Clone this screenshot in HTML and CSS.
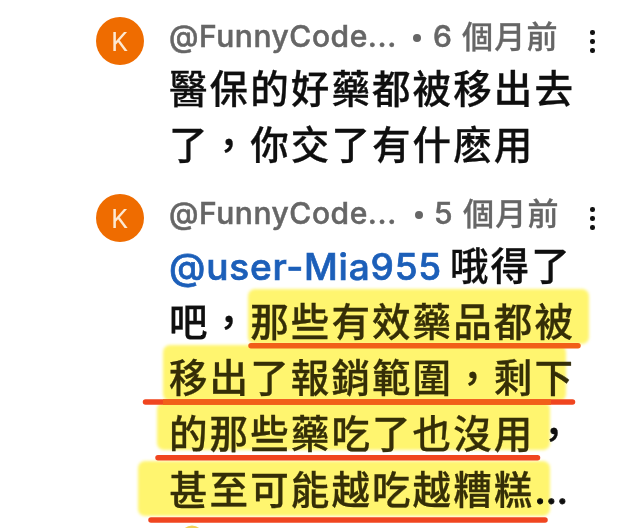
FILE: index.html
```html
<!DOCTYPE html>
<html lang="zh-Hant">
<head>
  <meta charset="UTF-8" />
  <title>留言</title>
  <link rel="stylesheet" href="styles.css">
</head>
<body>
  <main class="comments">

    <article class="comment">
      <div class="avatar">K</div>
      <div class="comment-body">
        <header class="comment-header">
          <span class="author">@FunnyCode...</span>
          <span class="dot"></span>
          <span class="number">6</span>
          <span class="time">個月前</span>
        </header>
        <p class="comment-text">醫保的好藥都被移出去<br>了，你交了有什麽用</p>
      </div>
      <div class="menu"><i></i><i></i><i></i></div>
    </article>

    <article class="comment second">
      <div class="avatar">K</div>
      <div class="comment-body">
        <header class="comment-header">
          <span class="author">@FunnyCode...</span>
          <span class="dot"></span>
          <span class="number">5</span>
          <span class="time">個月前</span>
        </header>
        <p class="comment-text"><a class="mention">@user-Mia955</a>哦得了<br>吧，<span class="marked">那些有效藥品都被</span><br><span class="marked">移出了報銷範圍，剩下</span><br><span class="marked">的那些藥吃了也沒用</span>，<br><span class="marked">甚至可能越吃越糟糕</span><span class="more">...</span></p>
      </div>
      <div class="menu"><i></i><i></i><i></i></div>
    </article>

    <!-- highlighter strokes over the text -->
    <svg class="overlay highlighter" viewBox="0 0 640 528">
      <rect x="248" y="289" width="341" height="55" rx="7" />
      <rect x="163" y="345" width="403" height="56" rx="7" />
      <rect x="157" y="402" width="393" height="48" rx="7" />
      <rect x="138" y="461" width="412" height="55" rx="7" />
    </svg>

    <!-- red pen underlines -->
    <svg class="overlay pen" viewBox="0 0 640 528">
      <path class="over" d="M251 345.8H578" />
      <path d="M145.5 401.9H572.5" />
      <path class="over flat" d="M163 401.9H551" />
      <path d="M158 457.8H537.5" />
      <path d="M151 520H545" />
      <circle cx="192" cy="537" r="11.5" />
    </svg>
  </main>
</body>
</html>
```

FILE: styles.css
```css
body {
  margin: 0;
  background-color: #fff;
  font-family: Inter, "Noto Sans CJK TC", sans-serif;
}

.comments {
  position: relative;
  width: 640px;
  height: 528px;
  overflow: hidden;
}

.comment {
  display: flex;
  align-items: flex-start;
  height: 177px;
  padding-left: 96px;
  box-sizing: border-box;
}

.comment.second {
  height: 351px;
}

.avatar {
  width: 48px;
  height: 48px;
  margin-top: 17px;
  border-radius: 50%;
  background-color: #ef6c00;
  color: #fde9d2;
  font-family: Roboto, sans-serif;
  font-size: 26px;
  line-height: 50px;
  text-align: center;
  text-indent: -1px;
}

.comment-body {
  width: 415px;
  margin-left: 25px;
}

.comment-header {
  display: flex;
  align-items: center;
  height: 58px;
  padding-top: 18px;
  box-sizing: border-box;
  color: #666;
  font-size: 30px;
  font-weight: 500;
  line-height: 40px;
  white-space: nowrap;
}

.author {
  width: 228px;
  margin-top: -4px;
  letter-spacing: 0.55px;
  -webkit-text-stroke: 0.5px #666;
}

.dot {
  width: 8px;
  height: 8px;
  margin-left: 16px;
  border-radius: 50%;
  background-color: #666;
}

.number {
  width: 19px;
  margin-top: -4px;
  margin-left: 12px;
  -webkit-text-stroke: 0.5px #666;
}

.second .dot {
  margin-left: 18px;
}

.second .number {
  margin-left: 11px;
}

.time {
  margin-top: -7px;
  margin-left: 10px;
  font-family: "Noto Sans CJK TC", sans-serif;
  font-size: 31px;
  letter-spacing: 1.3px;
  -webkit-text-stroke: 0.3px #666;
}

.comment-text {
  margin: 0;
  color: #0f0f0f;
  font-family: "Noto Sans CJK TC", sans-serif;
  font-size: 38.5px;
  font-weight: 500;
  letter-spacing: 2.1px;
  line-height: 56px;
  white-space: nowrap;
  -webkit-text-stroke: 0.3px currentColor;
}

.mention {
  display: inline-block;
  width: 281px;
  color: #1c5fb9;
  font-family: Inter, sans-serif;
  font-size: 37px;
  letter-spacing: 0.8px;
  line-height: 1;
  -webkit-text-stroke: 0.7px #1c5fb9;
}

.marked {
  color: #35300f;
}

.more {
  font-family: Inter, sans-serif;
  font-size: 37px;
  letter-spacing: 0;
  -webkit-text-stroke: 0.8px currentColor;
}

.menu {
  display: flex;
  flex-direction: column;
  gap: 4.5px;
  margin-top: 30px;
  margin-left: 6px;
}

.menu i {
  width: 4.5px;
  height: 4.5px;
  border-radius: 50%;
  background-color: #111;
}

.overlay {
  position: absolute;
  top: 0;
  left: 0;
  width: 640px;
  height: 528px;
}

.highlighter {
  fill: #fff56f;
  filter: blur(1.5px);
  mix-blend-mode: multiply;
}

.pen {
  fill: none;
  stroke: #f0451f;
  stroke-width: 5.5;
  stroke-linecap: round;
}

.pen .over {
  stroke: #f15f18;
}

.pen .flat {
  stroke-linecap: butt;
}

.pen circle {
  fill: #f2cf55;
  stroke: none;
}
```
